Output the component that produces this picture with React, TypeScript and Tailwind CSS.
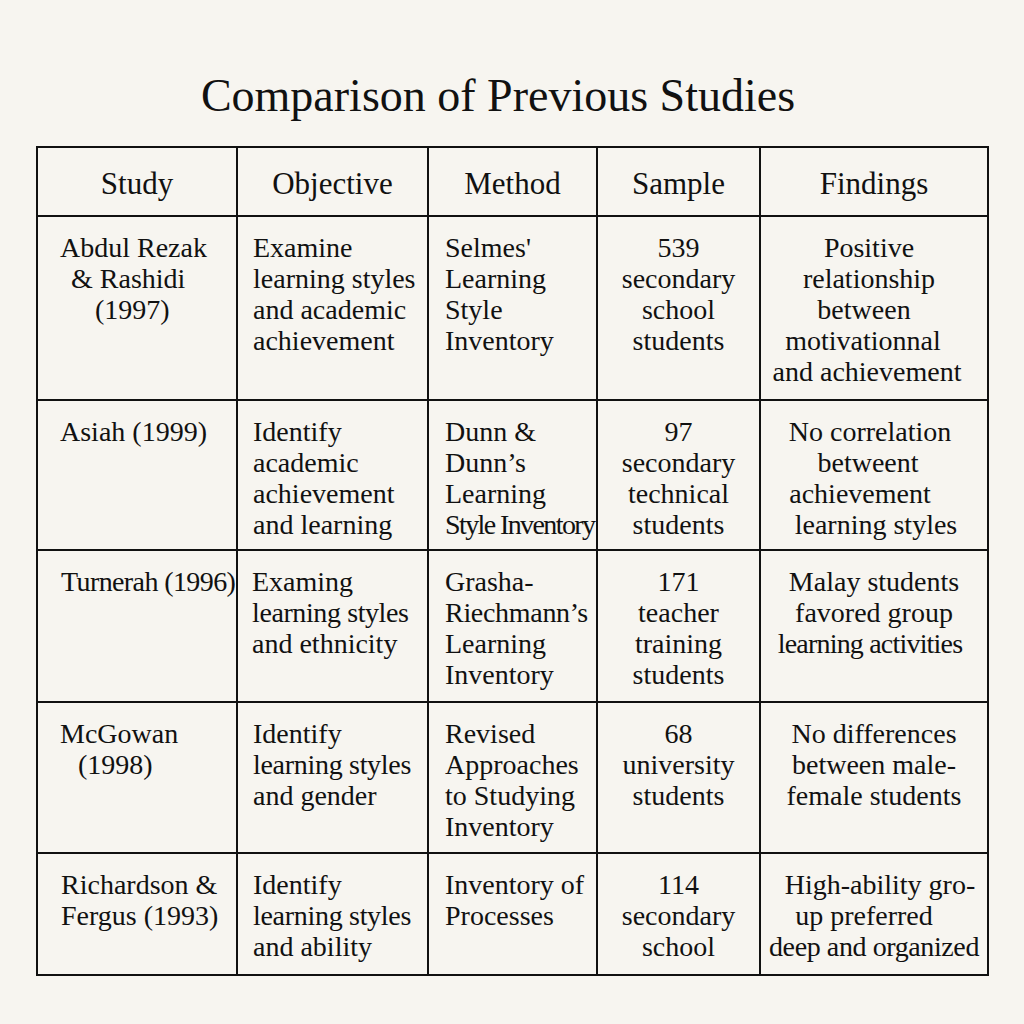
import React from "react";

type Line = { t: string; cls?: string };
type Cell = { lines: Line[]; align: "left" | "center"; pad?: string };

const L = (t: string, cls?: string): Line => ({ t, cls });

const rows: { h: string; cells: Cell[] }[] = [
  {
    h: "h-[184px]",
    cells: [
      { align: "left", lines: [L("Abdul Rezak", "pl-[22px]"), L("& Rashidi", "pl-[33px]"), L("(1997)", "pl-[57px]")] },
      { align: "left", pad: "pl-[15px]", lines: [L("Examine"), L("learning styles"), L("and academic"), L("achievement")] },
      { align: "left", pad: "pl-[16px]", lines: [L("Selmes'"), L("Learning"), L("Style"), L("Inventory")] },
      { align: "center", lines: [L("539"), L("secondary"), L("school"), L("students")] },
      { align: "center", lines: [L("Positive", "pr-[10px]"), L("relationship", "pr-[10px]"), L("between", "pr-[20px]"), L("motivationnal", "pr-[22px]"), L("and achievement", "pr-[14px]")] },
    ],
  },
  {
    h: "h-[150px]",
    cells: [
      { align: "left", lines: [L("Asiah (1999)", "pl-[22px]")] },
      { align: "left", pad: "pl-[15px]", lines: [L("Identify"), L("academic"), L("achievement"), L("and learning")] },
      { align: "left", pad: "pl-[16px]", lines: [L("Dunn &"), L("Dunn\u2019s"), L("Learning"), L("Style Inventory", "tracking-[-1.6px]")] },
      { align: "center", lines: [L("97"), L("secondary"), L("technical"), L("students")] },
      { align: "center", lines: [L("No correlation", "pr-[8px]"), L("betweent", "pr-[12px]"), L("achievement", "pr-[28px]"), L("learning styles", "pl-[4px]")] },
    ],
  },
  {
    h: "h-[152px]",
    cells: [
      { align: "left", lines: [L("Turnerah (1996)", "pl-[23px] tracking-[-0.6px]")] },
      { align: "left", pad: "pl-[14px]", lines: [L("Examing"), L("learning styles", "tracking-[-0.4px]"), L("and ethnicity")] },
      { align: "left", pad: "pl-[16px]", lines: [L("Grasha-"), L("Riechmann\u2019s", "tracking-[-0.3px]"), L("Learning"), L("Inventory")] },
      { align: "center", lines: [L("171"), L("teacher"), L("training"), L("students")] },
      { align: "center", lines: [L("Malay students"), L("favored group"), L("learning activities", "tracking-[-0.8px] pr-[8px]")] },
    ],
  },
  {
    h: "h-[151px]",
    cells: [
      { align: "left", lines: [L("McGowan", "pl-[22px]"), L("(1998)", "pl-[40px]")] },
      { align: "left", pad: "pl-[15px]", lines: [L("Identify"), L("learning styles", "tracking-[-0.3px]"), L("and gender")] },
      { align: "left", pad: "pl-[16px]", lines: [L("Revised"), L("Approaches"), L("to Studying"), L("Inventory")] },
      { align: "center", lines: [L("68"), L("university"), L("students")] },
      { align: "center", lines: [L("No differences"), L("between male-"), L("female students")] },
    ],
  },
  {
    h: "h-[122px]",
    cells: [
      { align: "left", lines: [L("Richardson &", "pl-[23px]"), L("Fergus (1993)", "pl-[23px]")] },
      { align: "left", pad: "pl-[15px]", lines: [L("Identify"), L("learning styles", "tracking-[-0.3px]"), L("and ability")] },
      { align: "left", pad: "pl-[16px]", lines: [L("Inventory of"), L("Processes")] },
      { align: "center", lines: [L("114"), L("secondary"), L("school")] },
      { align: "center", lines: [L("High-ability gro-", "pl-[12px]"), L("up preferred", "pr-[20px]"), L("deep and organized", "tracking-[-0.4px]")] },
    ],
  },
];

const headers = ["Study", "Objective", "Method", "Sample", "Findings"];

export default function App() {
  return (
    <div className="w-[1024px] h-[1024px] bg-[#f7f5f0] text-[#111] font-['Liberation_Serif','Times_New_Roman',serif] overflow-hidden">
      <h1 className="pt-[70px] pr-[28px] text-center text-[46px] leading-[52px] font-normal">
        Comparison of Previous Studies
      </h1>
      <div className="mt-[24px] ml-[36px]">
        <table className="table-fixed border-collapse border-2 border-[#111] w-[951px]">
          <colgroup>
            <col className="w-[200px]" />
            <col className="w-[191px]" />
            <col className="w-[169px]" />
            <col className="w-[163px]" />
            <col className="w-[228px]" />
          </colgroup>
          <thead>
            <tr className="h-[69px]">
              {headers.map((h) => (
                <th
                  key={h}
                  className="border-2 border-[#111] text-center align-middle text-[31px] font-normal leading-[36px] pt-[4px]"
                >
                  {h}
                </th>
              ))}
            </tr>
          </thead>
          <tbody>
            {rows.map((r, i) => (
              <tr key={i} className={r.h}>
                {r.cells.map((c, j) => (
                  <td
                    key={j}
                    className={`border-2 border-[#111] align-top pt-[15px] text-[28px] leading-[31px] ${
                      c.align === "center" ? "text-center" : "text-left"
                    } ${c.pad ?? ""}`}
                  >
                    {c.lines.map((l, k) => (
                      <div key={k} className={`whitespace-nowrap ${l.cls ?? ""}`}>
                        {l.t}
                      </div>
                    ))}
                  </td>
                ))}
              </tr>
            ))}
          </tbody>
        </table>
      </div>
    </div>
  );
}
